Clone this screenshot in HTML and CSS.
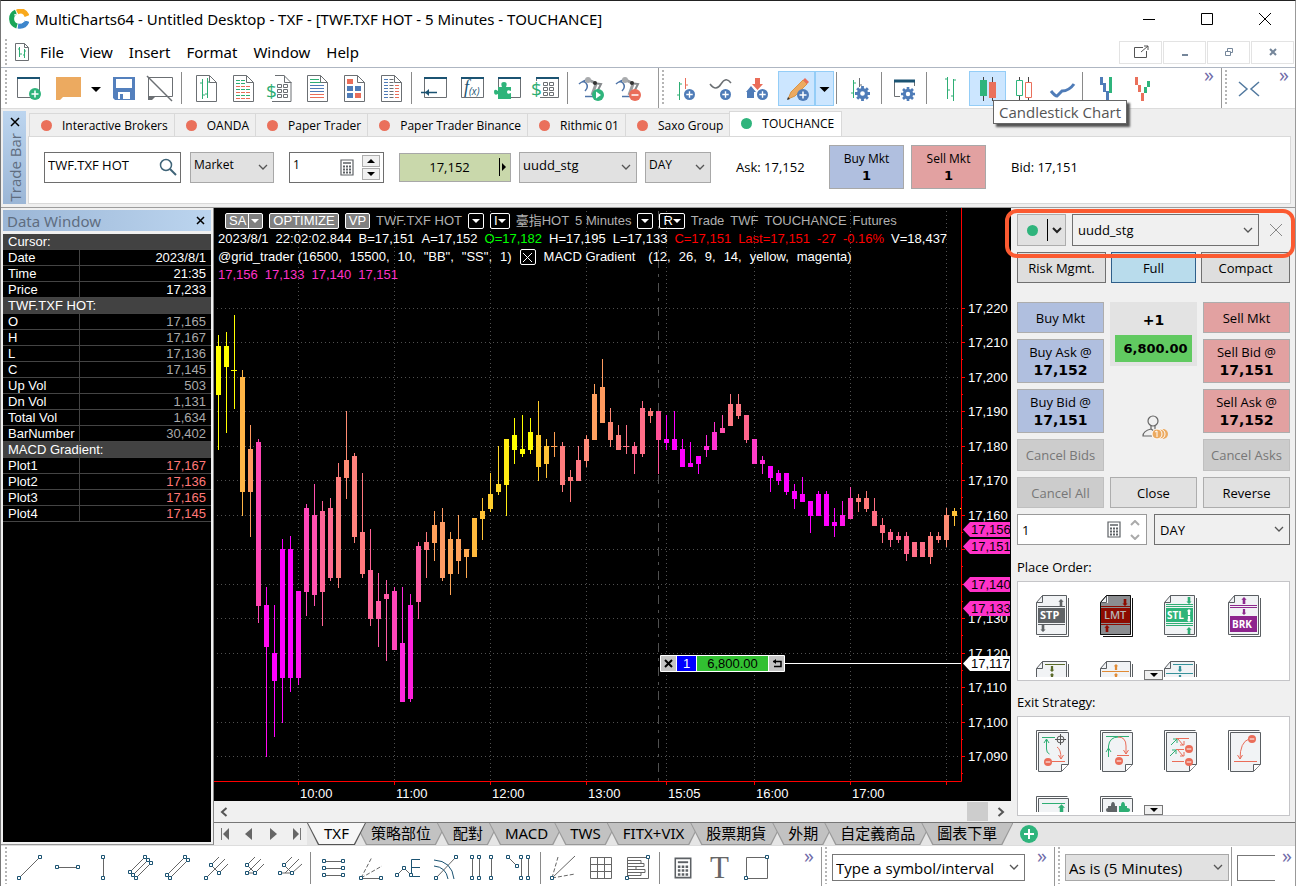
FILE: index.html
```
<!DOCTYPE html>
<html lang="en">
<head>
    <meta charset="UTF-8">
    <meta name="viewport" content="width=device-width, initial-scale=1.0">
    <title>MultiCharts64 - Untitled Desktop</title>
    <link rel="stylesheet" href="styles.css">
</head>
<body>
    <!-- shared icon parts -->
    <svg class="defs" width="0" height="0">
        <symbol id="page" viewBox="0 0 37 35"><path d="M9.500 4.500h13l7 7v19h-20zM22.500 4.500v7h7" fill="#fff" stroke="#6b6f73"/></symbol>
        <symbol id="win" viewBox="0 0 37 35"><path d="M7.500 7v19.500h22V7" fill="#fff" stroke="#6b6f73"/><path d="M7 7h23" stroke="#1b5372" stroke-width="2"/></symbol>
        <symbol id="plus" viewBox="0 0 12 12"><circle cx="6" cy="6" r="6"/><path d="M6 2.500v7M2.500 6h7" stroke="#fff" stroke-width="1.500"/></symbol>
        <symbol id="minus" viewBox="0 0 12 12"><circle cx="6" cy="6" r="6" fill="#ea6d59"/><path d="M2.500 6h7" stroke="#fff" stroke-width="1.500"/></symbol>
        <symbol id="gear" viewBox="0 0 16 16"><path d="M8 0v16M0 8h16M2.300 2.300l11.400 11.400M13.700 2.300L2.300 13.700" stroke="#4f7cb8" stroke-width="3"/><circle cx="8" cy="8" r="4.200" fill="#fff" stroke="#4f7cb8" stroke-width="3.400"/></symbol>
        <symbol id="calc" viewBox="0 0 14 17"><path d="M1 1h12v15H1z" fill="#fff" stroke="#5d6165" stroke-width="1.200"/><path d="M3 4h8" stroke="#5d6165" stroke-width="1.500"/><path d="M3 7.500h8M3 10.500h8M3 13.500h8" stroke="#5d6165" stroke-width="2" stroke-dasharray="2 1"/></symbol>
        <symbol id="arm" viewBox="0 0 37 35"><path d="M6 13q4-4 7-1 3 4-1 8M9 11l6-3" fill="none" stroke="#4f74a8" stroke-width="1.500"/><path d="M14 8l8 4M23 13l-4 11" stroke="#9b9da0" stroke-width="3"/><path d="M20 12l8 1-6 12" fill="none" stroke="#85888b" stroke-width="2"/><circle cx="15" cy="9" r="3" fill="#a9abad"/><circle cx="22" cy="12" r="2" fill="#333"/><path d="M12 25.500h8" stroke="#4f74a8" stroke-width="1.500"/></symbol>
        <symbol id="sheet" viewBox="0 0 34 42"><path d="M6.500.5h24v39H.5v-32zM6.500.5v7h-6" fill="#f1f3f5" stroke="#5a5e62"/><path d="M32.500 3v38.500H3" fill="none" stroke="#5a5e62"/></symbol>
        <symbol id="plan" viewBox="0 0 34 42"><path d="M.5 40V.5h31" fill="none" stroke="#5a5e62"/><path d="M2.500 2.500h30v32l-7 7h-23z" fill="#f1f3f5" stroke="#5a5e62"/><path d="M25.500 41v-6.500h7" fill="#fff" stroke="#5a5e62"/></symbol>
        <symbol id="up" viewBox="0 0 6 8"><path d="M3 0l3 3H4.500v5h-3V3H0z"/></symbol>
        <symbol id="down" viewBox="0 0 6 8"><path d="M3 8L0 5h1.500V0h3v5H6z"/></symbol>
        <symbol id="node" viewBox="0 0 4 4"><path d="M.5.5h3v3h-3z" fill="#fff" stroke="#1b5372"/></symbol>
    </svg>

    <header class="title-bar">
        <svg class="logo" width="20" height="20" viewBox="0 0 20 20" fill="none" stroke-width="5"><path d="M7 3a7.500 7.500 0 0 0 1 14" stroke="#19a558"/><path d="M8 3q7-3 10 4" stroke="#f9a91d"/><path d="M9 17q7 1 9-5" stroke="#3d86cc"/><path d="M12 14q3-2 8-4M5 6q2 0 4-2" stroke="#fff" stroke-width="1"/></svg>
        <h1>MultiCharts64 - Untitled Desktop - TXF - [TWF.TXF HOT - 5 Minutes - TOUCHANCE]</h1>
        <div class="window-controls">
            <button aria-label="Minimize"><svg width="14" height="14"><path d="M1 7.500h12" stroke="#000"/></svg></button>
            <button aria-label="Maximize"><svg width="14" height="14"><path d="M1.500 1.500h11v11h-11z" fill="none" stroke="#000"/></svg></button>
            <button aria-label="Close"><svg width="14" height="14"><path d="M1 1l12 12M13 1L1 13" stroke="#000"/></svg></button>
        </div>
    </header>

    <nav class="menu-bar">
        <span class="grip"></span>
        <svg class="menu-icon" width="16" height="19"><path d="M1.500.5h9l4 4v13h-13zM10.500.5v4h4" fill="#fff" stroke="#6b6f73"/><path d="M5.500 4v10M4 6h1M6 11h2M10.500 6v9M9 12h1M11 8h1" stroke="#2eae74"/></svg>
        <a href="#">File</a>
        <a href="#">View</a>
        <a href="#">Insert</a>
        <a href="#">Format</a>
        <a href="#">Window</a>
        <a href="#">Help</a>
        <div class="mdi-controls">
            <button aria-label="Detach"><svg width="16" height="14"><path d="M10 2.500H1.500v10h12V6M8 7l7-6M11 1h4v4" fill="none" stroke="#555"/></svg></button>
            <button aria-label="Minimize chart"><svg width="10" height="10"><path d="M2 8h6" stroke="#75869a" stroke-width="2"/></svg></button>
            <button aria-label="Restore chart"><svg width="10" height="10"><path d="M1.500 4.500h5v4h-5zM3.500 4V1.500h5v4H7" fill="none" stroke="#75869a"/></svg></button>
            <button aria-label="Close chart"><svg width="10" height="10"><path d="M2 2l6 6M8 2L2 8" stroke="#75869a" stroke-width="2"/></svg></button>
        </div>
    </nav>

    <div class="toolbar">
        <span class="grip"></span>
        <button class="tool" aria-label="New"><svg viewBox="0 0 37 35"><use href="#win"/><use href="#plus" x="19" y="17" width="12" height="12" fill="#2fb47c"/></svg></button>
        <button class="tool gap-left" aria-label="Open"><svg viewBox="0 0 37 35"><path d="M6 6h25v20H13l-3 3H6z" fill="#ecaa60"/></svg></button>
        <button class="tool drop" aria-label="Open menu"><svg viewBox="0 0 18 35"><path d="M4 16h10l-5 5z" fill="#000"/></svg></button>
        <button class="tool" aria-label="Save"><svg viewBox="0 0 37 35"><path d="M8 6h22v23H10l-2-2z" fill="#5480bd"/><path d="M11 8h16v9H11z" fill="#fff"/><path d="M13 21h12v7H13z" fill="#fff"/><path d="M15 23h3v5h-3z" fill="#5480bd"/></svg></button>
        <button class="tool" aria-label="Close workspace"><svg viewBox="0 0 37 35"><path d="M6.500 6.500h24v19h-19l-5 3z" fill="none" stroke="#6b6f73"/><path d="M6 25h8l-4 4H6z" fill="#6b6f73"/><path d="M5 5l25 25" stroke="#6b6f73" stroke-width="1.500"/></svg></button>
        <span class="sep"></span>
        <button class="tool" aria-label="Chart window"><svg viewBox="0 0 37 35"><use href="#page"/><path d="M15.500 8v20M13 12h2M16 24h2M20.500 7v20M18 23h2M21 11h2" stroke="#2eae74"/></svg></button>
        <button class="tool" aria-label="Scanner"><svg viewBox="0 0 37 35"><use href="#page"/><g stroke-dasharray="4 1"><path d="M12 9.500h9M12 12.500h9M12 18.500h14M12 24.500h14" stroke="#2eae74"/><path d="M12 15.500h14M12 21.500h14M12 27.500h14" stroke="#ea6d59"/></g></svg></button>
        <button class="tool" aria-label="Portfolio"><svg viewBox="0 0 37 35"><path d="M14 4.500h9l7 7v19H11M23.500 4.500v7h7" fill="none" stroke="#6b6f73"/><path d="M16.500 13.500h4v3h-4zM22.500 13.500h4v3h-4zM16.500 18.500h4v3h-4zM22.500 18.500h4v3h-4zM16.500 23.500h4v3h-4zM22.500 23.500h4v3h-4z" fill="none" stroke="#6b6f73"/><text x="5" y="27" font-size="19" fill="#2eae74">$</text></svg></button>
        <button class="tool" aria-label="Order tracker"><svg viewBox="0 0 37 35"><use href="#page"/><path d="M12 8.500h9M12 11.500h11" stroke="#2eae74"/><path d="M12 14.500h14M12 17.500h14M12 20.500h14" stroke="#4f7cb8"/><path d="M12 23.500h14M12 26.500h14" stroke="#ea6d59"/></svg></button>
        <button class="tool" aria-label="DOM"><svg viewBox="0 0 37 35"><use href="#page"/><path d="M12 8h6v5h-6zM20 22h6v5h-6z" fill="#ea6d59"/><path d="M12 15h6v5h-6zM20 15h6v5h-6zM12 22h6v5h-6z" fill="#4f7cb8"/></svg></button>
        <button class="tool" aria-label="Time and sales"><svg viewBox="0 0 37 35"><use href="#page"/><g stroke-width="4" stroke-dasharray="1 2"><path d="M14 8v21" stroke="#4f7cb8"/><path d="M19.500 8v21" stroke="#6b6f73"/><path d="M25 14v15" stroke="#ea6d59"/></g></svg></button>
        <span class="sep"></span>
        <button class="tool" aria-label="Insert symbol"><svg viewBox="0 0 37 35"><use href="#win"/><path d="M4 21.500h16" stroke="#1b5372" stroke-width="1.500"/><path d="M12 18l-4 3.500 4 3.500z" fill="#1b5372"/></svg></button>
        <button class="tool" aria-label="Insert study"><svg viewBox="0 0 37 35"><use href="#win"/><text x="10" y="22" font-size="18" font-style="italic" font-family="Liberation Serif, serif" fill="#1b5372">f</text><text x="15" y="24" font-size="10" fill="#1b5372" font-style="italic">(x)</text></svg></button>
        <button class="tool" aria-label="Add-ons"><svg viewBox="0 0 37 35"><use href="#win"/><path d="M7 16h4q-2-5 2-5t2 5h5v4q-4-2-4 1t4 1v6H7v-5q-4 2-4-2t4-1z" fill="#2eb47a"/></svg></button>
        <button class="tool" aria-label="Quotes"><svg viewBox="0 0 37 35"><path d="M8.500 10V7h22v19.500H12" fill="none" stroke="#6b6f73"/><path d="M8 7h23" stroke="#1b5372" stroke-width="2"/><path d="M15.500 11.500h4v3h-4zM21.500 11.500h4v3h-4zM15.500 16.500h4v3h-4zM21.500 16.500h4v3h-4zM15.500 21.500h4v3h-4zM21.500 21.500h4v3h-4z" fill="none" stroke="#6b6f73"/><text x="3" y="25" font-size="19" fill="#2eae74">$</text></svg></button>
        <span class="sep"></span>
        <button class="tool" aria-label="Start auto trading"><svg viewBox="0 0 37 35"><use href="#arm"/><circle cx="25" cy="24" r="6" fill="#2fb47c"/><path d="M23 20.500l5 3.500-5 3.500z" fill="#fff"/></svg></button>
        <button class="tool" aria-label="Stop auto trading"><svg viewBox="0 0 37 35"><use href="#arm"/><use href="#minus" x="19" y="18" width="12" height="12"/></svg></button>
        <span class="band-end wide"></span>
        <span class="grip"></span>
        <button class="tool" aria-label="Add instrument"><svg viewBox="0 0 37 35"><path d="M12.500 11v18M10 24h2M13 13h2" stroke="#2eae74"/><path d="M18.500 7v11M19 14h2" stroke="#ea6d59"/><use href="#plus" x="17" y="18" width="11" height="11" fill="#4f7cb8"/></svg></button>
        <button class="tool" aria-label="Add indicator"><svg viewBox="0 0 37 35"><path d="M6 13q6 8 11 0t10-1" fill="none" stroke="#6b6f73" stroke-width="1.500"/><use href="#plus" x="16" y="18" width="11" height="11" fill="#4f7cb8"/></svg></button>
        <button class="tool" aria-label="Add signal"><svg viewBox="0 0 37 35"><path d="M10 15l5 6h-2v6H6v-6H5z" fill="#4f7cb8"/><path d="M14 7h5v6h3l-5.500 6L11 13h3z" fill="#ea6d59"/><use href="#plus" x="16" y="18" width="11" height="11" fill="#4f7cb8"/></svg></button>
        <button class="tool on" aria-label="Drawing"><svg viewBox="0 0 37 35"><path d="M10 28l3-7 12-12 4 4-12 12z" fill="#ecaa60" stroke="#d99445"/><path d="M25 9l2-2 4 4-2 2z" fill="#ea6d59"/><path d="M9 29l1-3 2 2z" fill="#333"/><use href="#plus" x="19" y="18" width="12" height="12" fill="#4f7cb8"/></svg></button>
        <button class="tool drop on" aria-label="Drawing menu"><svg viewBox="0 0 18 35"><path d="M4 16h10l-5 5z" fill="#000"/></svg></button>
        <span class="sep"></span>
        <button class="tool" aria-label="Format instrument"><svg viewBox="0 0 37 35"><path d="M11.500 9v18M9 22h2M12 12h2" stroke="#2eae74"/><path d="M17.500 7v9M18 14h2" stroke="#6b6f73"/><use href="#gear" x="13" y="15" width="15" height="15"/></svg></button>
        <span class="sep"></span>
        <button class="tool" aria-label="Format window"><svg viewBox="0 0 37 35"><path d="M7.500 9v16.500H13M27.500 9v6" fill="none" stroke="#6b6f73"/><path d="M7 10h21" stroke="#1b5372" stroke-width="3"/><use href="#gear" x="14" y="16" width="14" height="14"/></svg></button>
        <span class="sep"></span>
        <button class="tool" aria-label="Bar chart"><svg viewBox="0 0 37 35"><path d="M15.500 6v22M13 8h2M16 19h2M21.500 8v22M19 25h2M22 9h2" stroke="#2eae74"/></svg></button>
        <div class="tip-holder">
            <button class="tool on" aria-label="Candlestick Chart"><svg viewBox="0 0 37 35"><path d="M14.500 6v24M23.500 6v24" stroke="#444"/><path d="M11 9h7v16h-7z" fill="#2fb47c"/><path d="M20 11h7v16h-7z" fill="#ea705b"/></svg></button>
            <div class="tooltip" role="tooltip">Candlestick Chart</div>
        </div>
        <button class="tool" aria-label="Hollow candlestick"><svg viewBox="0 0 37 35"><path d="M13.500 6v24M22.500 6v24" stroke="#444"/><path d="M10.500 9.500h6v15h-6z" fill="#fff" stroke="#2fb47c"/><path d="M19.500 11.500h6v15h-6z" fill="#fff" stroke="#ea705b"/></svg></button>
        <button class="tool" aria-label="Line chart"><svg viewBox="0 0 37 35"><path d="M8 20q4 5 6 5l5-5q7 0 12-7" fill="none" stroke="#4f7cb8" stroke-width="3"/></svg></button>
        <span class="sep"></span>
        <button class="tool" aria-label="Kagi"><svg viewBox="0 0 37 35"><path d="M12 6h3v8h-3zM15 12h3v9h-3zM18 20h3v10h-3z" fill="#4f7cb8"/><path d="M21 6h3v16h-3z" fill="#2fb47c"/></svg></button>
        <button class="tool" aria-label="Renko"><svg viewBox="0 0 37 35"><path d="M10 6h3v8h-3zM13 14h3v7h-3zM16 22h3v8h-3z" fill="#ea705b"/><path d="M19 16h3v6h-3zM22 10h3v6h-3z" fill="#2fb47c"/></svg></button>
        <span class="fill"></span>
        <button class="more" aria-label="More tools">»</button>
        <span class="band-end"></span>
        <span class="grip"></span>
        <button class="tool" aria-label="Squeeze bars"><svg viewBox="0 0 37 35"><path d="M9 11l8 7-8 7M29 11l-8 7 8 7" fill="none" stroke="#52799f" stroke-width="1.500"/></svg></button>
        <span class="space"></span>
        <button class="more" aria-label="More tools">»</button>
    </div>

    <section class="trade-bar">
        <div class="trade-handle">
            <button aria-label="Close trade bar"><svg width="10" height="10"><path d="M1 1l8 8M9 1L1 9" stroke="#000" stroke-width="1.500"/></svg></button>
            <span>Trade Bar</span>
        </div>
        <div class="trade-body">
            <div class="broker-tabs">
                <button><i class="dot"></i>Interactive Brokers</button>
                <button><i class="dot"></i>OANDA</button>
                <button><i class="dot"></i>Paper Trader</button>
                <button><i class="dot"></i>Paper Trader Binance</button>
                <button><i class="dot"></i>Rithmic 01</button>
                <button><i class="dot"></i>Saxo Group</button>
                <button class="active"><i class="dot live"></i>TOUCHANCE</button>
            </div>
            <form class="trade-form">
                <div class="field symbol-field">
                    <input type="text" value="TWF.TXF HOT" aria-label="Symbol">
                    <svg width="18" height="18"><circle cx="7" cy="7" r="5.500" fill="none" stroke="#3f6478" stroke-width="1.500"/><path d="M11 11l6 6" stroke="#3f6478" stroke-width="2"/></svg>
                </div>
                <select class="order-type" aria-label="Order type"><option>Market</option></select>
                <div class="field qty-field">
                    <input type="text" value="1" aria-label="Quantity">
                    <svg width="14" height="17"><use href="#calc"/></svg>
                    <span class="spin"><button type="button" aria-label="Up"><svg width="8" height="4"><path d="M4 0l4 4H0z"/></svg></button><button type="button" aria-label="Down"><svg width="8" height="4"><path d="M4 4l4-4H0z"/></svg></button></span>
                </div>
                <button type="button" class="price"><span>17,152</span><svg width="8" height="18"><path d="M.5 0v18" stroke="#000"/><path d="M3 5l4 4-4 4z"/></svg></button>
                <select class="account" aria-label="Account"><option>uudd_stg</option></select>
                <select class="tif" aria-label="Time in force"><option>DAY</option></select>
                <span class="quote">Ask: 17,152</span>
                <button type="button" class="big buy">Buy Mkt<b>1</b></button>
                <button type="button" class="big sell">Sell Mkt<b>1</b></button>
                <span class="quote">Bid: 17,151</span>
            </form>
        </div>
    </section>

    <main class="workspace">
        <aside class="data-window">
            <div class="data-title">
                <h2>Data Window</h2>
                <button aria-label="Close data window"><svg width="9" height="9"><path d="M1 1l7 7M8 1L1 8" stroke="#000" stroke-width="1.500"/></svg></button>
            </div>
            <table>
                <tr><th colspan="2">Cursor:</th></tr>
                <tr><td>Date</td><td>2023/8/1</td></tr>
                <tr><td>Time</td><td>21:35</td></tr>
                <tr><td>Price</td><td>17,233</td></tr>
                <tr><th colspan="2">TWF.TXF HOT:</th></tr>
                <tr class="dim"><td>O</td><td>17,165</td></tr>
                <tr class="dim"><td>H</td><td>17,167</td></tr>
                <tr class="dim"><td>L</td><td>17,136</td></tr>
                <tr class="dim"><td>C</td><td>17,145</td></tr>
                <tr class="dim"><td>Up Vol</td><td>503</td></tr>
                <tr class="dim"><td>Dn Vol</td><td>1,131</td></tr>
                <tr class="dim"><td>Total Vol</td><td>1,634</td></tr>
                <tr class="dim"><td>BarNumber</td><td>30,402</td></tr>
                <tr><th colspan="2">MACD Gradient:</th></tr>
                <tr class="plot"><td>Plot1</td><td>17,167</td></tr>
                <tr class="plot"><td>Plot2</td><td>17,136</td></tr>
                <tr class="plot"><td>Plot3</td><td>17,165</td></tr>
                <tr class="plot"><td>Plot4</td><td>17,145</td></tr>
            </table>
        </aside>

        <div class="desk">
            <div class="desk-top">
                <section class="chart-pane">
                    <div class="chart" id="chart">
                        <div class="chart-status">
                            <div class="line tags">
                                <button class="tag">SA<i class="split"></i><i class="tri"></i></button>
                                <button class="tag">OPTIMIZE</button>
                                <button class="tag">VP</button>
                                <span>TWF.TXF HOT</span>
                                <button class="box" aria-label="Symbol menu"><i class="tri"></i></button>
                                <button class="box">I<i class="tri"></i></button>
                                <span>臺指HOT</span>
                                <span>5 Minutes</span>
                                <button class="box" aria-label="Interval menu"><i class="tri"></i></button>
                                <button class="box">R<i class="tri"></i></button>
                                <span>Trade</span>
                                <span>TWF</span>
                                <span>TOUCHANCE</span>
                                <span>Futures</span>
                            </div>
                            <div class="line">
                                <span>2023/8/1</span>
                                <span>22:02:02.844</span>
                                <span>B=17,151</span>
                                <span>A=17,152</span>
                                <span class="green">O=17,182</span>
                                <span>H=17,195</span>
                                <span>L=17,133</span>
                                <span class="red">C=17,151</span>
                                <span class="red">Last=17,151</span>
                                <span class="red">-27</span>
                                <span class="red">-0.16%</span>
                                <span>V=18,437</span>
                            </div>
                            <div class="line args">
                                <span>@grid_trader (16500,</span>
                                <span>15500,</span>
                                <span>10,</span>
                                <span>"BB",</span>
                                <span>"SS",</span>
                                <span>1)</span>
                                <button class="box cross" aria-label="Strategy off"><svg width="9" height="9"><path d="M0 0l9 9M9 0L0 9" stroke="#fff"/></svg></button>
                                <span>MACD Gradient</span>
                                <span class="params">(12,</span>
                                <span>26,</span>
                                <span>9,</span>
                                <span>14,</span>
                                <span>yellow,</span>
                                <span>magenta)</span>
                            </div>
                            <div class="line pink">
                                <span>17,156</span>
                                <span>17,133</span>
                                <span>17,140</span>
                                <span>17,151</span>
                            </div>
                        </div>
                        <div class="position">
                            <button aria-label="Close position"><svg width="9" height="9"><path d="M1 1l7 7M8 1L1 8" stroke="#000" stroke-width="2"/></svg></button>
                            <span class="size">1</span>
                            <span class="profit">6,800.00</span>
                            <button aria-label="Reverse position"><svg width="10" height="9"><path d="M1 2.500h8v5H2" fill="none" stroke="#000" stroke-width="1.500"/><path d="M4 0v5L1 2.500z"/></svg></button>
                        </div>
                    </div>
                    <div class="scroll">
                        <button aria-label="Scroll left"><svg width="8" height="10"><path d="M6.500 1L2 5l4.500 4" fill="none" stroke="#555" stroke-width="2"/></svg></button>
                        <span class="thumb"></span>
                        <button aria-label="Scroll right"><svg width="8" height="10"><path d="M1.500 1L6 5 1.500 9" fill="none" stroke="#555" stroke-width="2"/></svg></button>
                    </div>
                </section>

                <aside class="order-panel">
                    <div class="ring"></div>
                    <div class="account-row">
                        <button class="status" aria-label="Connection"><i class="dot live"></i><svg width="18" height="22"><path d="M1.500 0v22" stroke="#000"/><path d="M7 9l4 4 4-4" fill="none" stroke="#222" stroke-width="2"/></svg></button>
                        <select aria-label="Account"><option>uudd_stg</option></select>
                        <button class="close" aria-label="Close panel"><svg width="14" height="14"><path d="M1 1l12 12M13 1L1 13" stroke="#888"/></svg></button>
                    </div>
                    <div class="mode-row">
                        <button>Risk Mgmt.</button>
                        <button class="active">Full</button>
                        <button>Compact</button>
                    </div>
                    <div class="order-grid">
                        <div class="column">
                            <button class="buy">Buy Mkt</button>
                            <button class="buy two">Buy Ask @<b>17,152</b></button>
                            <button class="buy two">Buy Bid @<b>17,151</b></button>
                            <button class="cancel" disabled>Cancel Bids</button>
                            <button disabled>Cancel All</button>
                        </div>
                        <div class="column middle">
                            <div class="pnl"><b>+1</b><strong>6,800.00</strong></div>
                            <svg width="28" height="26"><circle cx="13" cy="6" r="5" fill="none" stroke="#666" stroke-width="1.200"/><path d="M11 11v3q-8 2-8 7h9M15 11v3l5 3M11 14l3 2 2-2" fill="none" stroke="#666" stroke-width="1.200"/><circle cx="23" cy="19" r="5" fill="#ecaa60"/><circle cx="20" cy="19" r="5" fill="#ecaa60" stroke="#fff"/><circle cx="17" cy="19" r="5" fill="#ecaa60" stroke="#fff"/><path d="M15 17l2-1v6" fill="none" stroke="#fff"/></svg>
                            <button>Close</button>
                        </div>
                        <div class="column">
                            <button class="sell">Sell Mkt</button>
                            <button class="sell two">Sell Bid @<b>17,151</b></button>
                            <button class="sell two">Sell Ask @<b>17,152</b></button>
                            <button class="cancel" disabled>Cancel Asks</button>
                            <button>Reverse</button>
                        </div>
                    </div>
                    <div class="size-row">
                        <div class="field">
                            <input type="text" value="1" aria-label="Order quantity">
                            <svg width="14" height="17"><use href="#calc"/></svg>
                            <svg width="10" height="20" fill="none" stroke="#aaa" stroke-width="2"><path d="M1 5l4-4 4 4M1 15l4 4 4-4"/></svg>
                        </div>
                        <select aria-label="Order duration"><option>DAY</option></select>
                    </div>
                    <h3>Place Order:</h3>
                    <div class="palette">
                        <div class="palette-items">
                            <button aria-label="Stop"><svg width="34" height="42"><use href="#sheet"/><path d="M2 11.500h27M2 29.500h27" stroke="#5a5e62"/><path d="M2 13h27v15H2z" fill="#5f6366"/><use href="#up" x="22" y="4" width="6" height="7" fill="#5f6366"/><use href="#down" x="4" y="30" width="6" height="7" fill="#5f6366"/><text x="4" y="24">STP</text></svg></button>
                            <button aria-label="Limit"><svg width="34" height="42"><use href="#sheet"/><path d="M1 8h7V1h22v38H1z" fill="#8b8d90"/><path d="M1 11.500h29M1 29.500h29" stroke="#8d0b00"/><path d="M1 13h29v15H1z" fill="#8d0b00"/><path d="M6.500.5h24v39H.5v-32zM32.500 3v38.500H3" fill="none" stroke="#111"/><use href="#down" x="22" y="4" width="6" height="7" fill="#8d0b00"/><use href="#up" x="4" y="30" width="6" height="7" fill="#8d0b00"/><text x="4" y="24" class="muted">LMT</text></svg></button>
                            <button aria-label="Stop limit"><svg width="34" height="42"><use href="#sheet"/><path d="M2 9.500h27M2 11.500h27M2 28.500h27M2 30.500h27" stroke="#2eae74"/><path d="M2 13h27v14H2z" fill="#2eb47a"/><use href="#down" x="22" y="2" width="6" height="7" fill="#2eae74"/><use href="#up" x="22" y="32" width="6" height="7" fill="#2eae74"/><use href="#up" x="22" y="14" width="6" height="6" fill="#fff"/><use href="#down" x="22" y="21" width="6" height="6" fill="#fff"/><text x="3" y="24" class="small">STL</text></svg></button>
                            <button aria-label="Breakout"><svg width="34" height="42"><use href="#sheet"/><path d="M2 10.500h27M2 12.500h27" stroke="#8d2a8d"/><path d="M2 21h27v16H2z" fill="#8d248d"/><use href="#up" x="13" y="2" width="6" height="7" fill="#8d2a8d"/><use href="#down" x="13" y="14" width="6" height="6" fill="#8d2a8d"/><text x="4" y="33" class="small">BRK</text></svg></button>
                            <button aria-label="Market if touched"><svg width="34" height="42"><use href="#sheet"/><path d="M9 3.500h20" stroke="#5b6b2a"/><use href="#down" x="13" y="5" width="6" height="6" fill="#5b6b2a"/><use href="#up" x="13" y="12" width="6" height="6" fill="#5b6b2a"/></svg></button>
                            <button aria-label="Limit on break"><svg width="34" height="42"><use href="#sheet"/><path d="M2 10.500h27" stroke="#e08a34"/><use href="#up" x="13" y="3" width="6" height="6" fill="#e08a34"/><use href="#up" x="13" y="12" width="6" height="6" fill="#e08a34"/></svg></button>
                            <button aria-label="Trailing"><svg width="34" height="42"><use href="#sheet"/><path d="M9 3.500h20M2 12.500h27" stroke="#35919a"/><use href="#down" x="13" y="5" width="6" height="6" fill="#35919a"/><use href="#down" x="13" y="14" width="6" height="6" fill="#35919a"/></svg></button>
                        </div>
                        <button class="expand" aria-label="More orders"><i class="tri dark"></i></button>
                    </div>
                    <h3>Exit Strategy:</h3>
                    <div class="palette">
                        <div class="palette-items">
                            <button aria-label="Stop and target"><svg width="34" height="42" fill="none"><use href="#plan"/><path d="M6 7.500h13M10.500 9v10q0 4 3 5M8 13l2.500-4 2.500 4" stroke="#2eae74"/><circle cx="24.500" cy="9.500" r="3.500" stroke="#555"/><path d="M24.500 4v11M19 9.500h11" stroke="#555"/><path d="M21 17q4 2 4 12M22.500 25l2.500 4 2.500-4M16 31.500h13" stroke="#ea6d59"/><use href="#minus" x="8" y="28" width="8" height="8"/></svg></button>
                            <button aria-label="Trailing stop"><svg width="34" height="42" fill="none"><use href="#plan"/><path d="M6 6.500h23M8.500 27V16q1-9 10-9M6 22l2.500-4 2.500 4" stroke="#2eae74"/><path d="M18 7q8 0 8 9v8M23.500 20l2.500 4 2.500-4M17 25.500h12" stroke="#ea6d59"/><use href="#minus" x="15" y="27" width="8" height="8"/></svg></button>
                            <button aria-label="Multi level"><svg width="34" height="42" fill="none"><use href="#plan"/><path d="M7 15l6-6M9 9h4v4M6 26l6-6M8 20h4v4" stroke="#2eae74"/><path d="M12 8.500h13M14 9l5 6M20 11v4h-4M12 19.500h8M14 20l5 6M20 22v4h-4M8 31.500h12" stroke="#ea6d59"/><use href="#minus" x="21" y="15" width="8" height="8"/><use href="#minus" x="21" y="28" width="8" height="8"/></svg></button>
                            <button aria-label="Breakeven"><svg width="34" height="42" fill="none"><use href="#plan"/><path d="M21 9q-9 3-9 20M9.500 25l2.500 4 2.500-4M6 31.500h23" stroke="#ea6d59"/><use href="#minus" x="20" y="5" width="8" height="8"/></svg></button>
                            <button aria-label="Profit target"><svg width="34" height="42" fill="none"><use href="#plan"/><path d="M6 7.500h23" stroke="#2eae74"/><use href="#up" x="22" y="8" width="7" height="10" fill="#2eae74"/></svg></button>
                            <button aria-label="Custom"><svg width="34" height="42" fill="none"><use href="#plan"/><path d="M8 10h3q0-4 2-4t2 4h2v8H8v-2q-2 0-2-2t2-2z" fill="#5f6366"/><path d="M19 10h2q0-4 2-4t2 4h2v2q3 0 3 2t-3 2v2h-8z" fill="#2eae74"/></svg></button>
                        </div>
                        <button class="expand" aria-label="More strategies"><i class="tri dark"></i></button>
                    </div>
                </aside>
            </div>

            <div class="sheet-tabs">
                <div class="sheet-nav">
                    <button aria-label="First"><svg width="10" height="12"><path d="M1.500 0v12" stroke="#777"/><path d="M9 0v12L3 6z" fill="#666"/></svg></button>
                    <button aria-label="Previous"><svg width="10" height="12"><path d="M8 0v12L1 6z" fill="#666"/></svg></button>
                    <button aria-label="Next"><svg width="10" height="12"><path d="M2 0v12l7-6z" fill="#666"/></svg></button>
                    <button aria-label="Last"><svg width="10" height="12"><path d="M8.500 0v12" stroke="#777"/><path d="M1 0v12l6-6z" fill="#666"/></svg></button>
                </div>
                <button class="sheet active"><span>TXF</span></button>
                <button class="sheet"><span>策略部位</span></button>
                <button class="sheet"><span>配對</span></button>
                <button class="sheet"><span>MACD</span></button>
                <button class="sheet"><span>TWS</span></button>
                <button class="sheet"><span>FITX+VIX</span></button>
                <button class="sheet"><span>股票期貨</span></button>
                <button class="sheet"><span>外期</span></button>
                <button class="sheet"><span>自定義商品</span></button>
                <button class="sheet"><span>圖表下單</span></button>
                <button class="add-sheet" aria-label="Add workspace"><svg width="18" height="18"><circle cx="9" cy="9" r="9" fill="#2fb47c"/><path d="M9 4v10M4 9h10" stroke="#fff" stroke-width="2"/></svg></button>
            </div>
        </div>
    </main>

    <footer class="toolbar draw-bar">
        <span class="grip"></span>
        <button class="tool" aria-label="Trend line"><svg viewBox="0 0 37 35"><path d="M7 28L28 7"/><use href="#node" x="5" y="26" width="4" height="4"/><use href="#node" x="26" y="5" width="4" height="4"/></svg></button>
        <button class="tool" aria-label="Horizontal line"><svg viewBox="0 0 37 35"><path d="M8 17.500h21"/><use href="#node" x="6" y="15" width="4" height="4"/><use href="#node" x="27" y="15" width="4" height="4"/></svg></button>
        <button class="tool" aria-label="Vertical line"><svg viewBox="0 0 37 35"><path d="M17.500 7v21"/><use href="#node" x="15" y="5" width="4" height="4"/><use href="#node" x="15" y="26" width="4" height="4"/></svg></button>
        <button class="tool" aria-label="Equidistant channel"><svg viewBox="0 0 37 35"><path d="M7 22L22 7M10 25l15-15M13 28l15-15"/><use href="#node" x="5" y="20" width="4" height="4"/><use href="#node" x="8" y="23" width="4" height="4"/><use href="#node" x="11" y="26" width="4" height="4"/><use href="#node" x="20" y="5" width="4" height="4"/><use href="#node" x="23" y="8" width="4" height="4"/><use href="#node" x="26" y="11" width="4" height="4"/></svg></button>
        <button class="tool" aria-label="Parallel lines"><svg viewBox="0 0 37 35"><path d="M7 25L25 7M10 28l18-18"/><use href="#node" x="5" y="23" width="4" height="4"/><use href="#node" x="8" y="26" width="4" height="4"/><use href="#node" x="23" y="5" width="4" height="4"/><use href="#node" x="26" y="8" width="4" height="4"/></svg></button>
        <button class="tool" aria-label="Pitchfork"><svg viewBox="0 0 37 35"><path d="M9 28L28 9M14 15l8-8M22 23l9-9M14 15l8 8"/><use href="#node" x="7" y="26" width="4" height="4"/><use href="#node" x="12" y="13" width="4" height="4"/><use href="#node" x="20" y="21" width="4" height="4"/></svg></button>
        <button class="tool" aria-label="Schiff pitchfork"><svg viewBox="0 0 37 35"><path d="M13 23L27 9M13 15l8-8M21 23l9-9M13 15l8 8h-8"/><use href="#node" x="11" y="21" width="4" height="4"/><use href="#node" x="11" y="13" width="4" height="4"/><use href="#node" x="19" y="21" width="4" height="4"/></svg></button>
        <button class="tool" aria-label="Modified pitchfork"><svg viewBox="0 0 37 35"><path d="M14 23L28 9M13 15l8-8M21 23l10-9M13 15l8 8H9"/><use href="#node" x="7" y="21" width="4" height="4"/><use href="#node" x="11" y="13" width="4" height="4"/><use href="#node" x="19" y="21" width="4" height="4"/></svg></button>
        <span class="sep"></span>
        <button class="tool" aria-label="Fibonacci retracement"><svg viewBox="0 0 37 35"><path d="M8 11.500h19M8 18.500h19M8 25.500h19"/><use href="#node" x="6" y="9" width="4" height="4"/><use href="#node" x="25" y="9" width="4" height="4"/><use href="#node" x="6" y="16" width="4" height="4"/><use href="#node" x="25" y="16" width="4" height="4"/><use href="#node" x="6" y="23" width="4" height="4"/><use href="#node" x="25" y="23" width="4" height="4"/></svg></button>
        <button class="tool" aria-label="Fibonacci fan"><svg viewBox="0 0 37 35"><path d="M8 28.500h20"/><path d="M8 28L19 7M8 28l21-12" stroke-dasharray="4 2"/><use href="#node" x="6" y="26" width="4" height="4"/><use href="#node" x="26" y="26" width="4" height="4"/></svg></button>
        <button class="tool" aria-label="Fibonacci extension"><svg viewBox="0 0 37 35"><path d="M7 25l7-7 7 7"/><path d="M30 9.500h-8.500v17H30M22 17.500h8" class="blue"/><use href="#node" x="5" y="23" width="4" height="4"/><use href="#node" x="12" y="16" width="4" height="4"/><use href="#node" x="19" y="23" width="4" height="4"/></svg></button>
        <button class="tool" aria-label="Fibonacci arcs"><svg viewBox="0 0 37 35"><path d="M9 28L29 7"/><path d="M7 10q18 1 20 19M7 16q12 1 14 13" class="blue"/><use href="#node" x="7" y="26" width="4" height="4"/><use href="#node" x="27" y="5" width="4" height="4"/></svg></button>
        <button class="tool" aria-label="Fibonacci time"><svg viewBox="0 0 37 35"><path d="M8.500 7v21M15.500 7v21M27.500 7v21"/><use href="#node" x="6" y="5" width="4" height="4"/><use href="#node" x="13" y="5" width="4" height="4"/><use href="#node" x="25" y="5" width="4" height="4"/><use href="#node" x="6" y="26" width="4" height="4"/><use href="#node" x="13" y="26" width="4" height="4"/><use href="#node" x="25" y="26" width="4" height="4"/></svg></button>
        <button class="tool" aria-label="Trend based time"><svg viewBox="0 0 37 35"><path d="M7 7l9 9M20.500 7v21M27.500 7v21"/><use href="#node" x="5" y="5" width="4" height="4"/><use href="#node" x="14" y="14" width="4" height="4"/><use href="#node" x="18" y="5" width="4" height="4"/><use href="#node" x="25" y="5" width="4" height="4"/><use href="#node" x="18" y="26" width="4" height="4"/><use href="#node" x="25" y="26" width="4" height="4"/></svg></button>
        <span class="sep"></span>
        <button class="tool" aria-label="Gann fan"><svg viewBox="0 0 37 35"><path d="M6 28L29 6"/><path d="M6 28l6-21M6 28l23-4" stroke-dasharray="4 2"/><use href="#node" x="4" y="26" width="4" height="4"/></svg></button>
        <button class="tool" aria-label="Gann grid"><svg viewBox="0 0 37 35"><path d="M7.500 7.500h21v21h-21zM14.500 7v21M21.500 7v21M7 14.500h21M7 21.500h21"/></svg></button>
        <button class="tool" aria-label="Volume profile"><svg viewBox="0 0 37 35"><path d="M7.500 7.500h21v21h-21zM8 10.500h13v3h3v3H16v3h9v3h-4v3H8M8 13.500h13M8 16.500h8M8 19.500h8M8 22.500h13"/><use href="#node" x="26" y="5" width="4" height="4"/><use href="#node" x="5" y="26" width="4" height="4"/></svg></button>
        <span class="sep"></span>
        <button class="tool" aria-label="Calculator"><svg viewBox="0 0 37 35"><use href="#calc" x="9" y="7" width="18" height="22"/></svg></button>
        <button class="tool" aria-label="Text"><svg viewBox="0 0 37 35"><text x="8" y="28" font-size="31" font-family="Liberation Serif, serif" fill="#666">T</text></svg></button>
        <button class="tool" aria-label="Rectangle"><svg viewBox="0 0 37 35"><path d="M7.500 7.500h21v21h-21z"/><use href="#node" x="26" y="5" width="4" height="4"/><use href="#node" x="5" y="26" width="4" height="4"/></svg></button>
        <span class="fill"></span>
        <button class="more" aria-label="More drawings">»</button>
        <span class="band-end"></span>
        <span class="grip"></span>
        <select class="symbol-pick" aria-label="Symbol or interval"><option>Type a symbol/interval</option></select>
        <span class="space"></span>
        <button class="more" aria-label="More symbols">»</button>
        <span class="band-end"></span>
        <span class="grip"></span>
        <select class="resolution" aria-label="Resolution"><option>As is (5 Minutes)</option></select>
        <span class="band-end"></span>
        <input class="tail" type="text" aria-label="Bars back">
        <button class="more" aria-label="More resolutions">»</button>
    </footer>

    <script src="chart.js"></script>
</body>
</html>
```
FILE: styles.css
```
* {
    box-sizing: border-box;
}
body {
    margin: 0;
    height: 100vh;
    display: flex;
    flex-direction: column;
    overflow: hidden;
    background-color: #fff;
    border-top: 1px solid #222;
    border-left: 1px solid #777;
    border-right: 1px solid #999;
    font-family: "Open Sans", "Noto Sans CJK TC", sans-serif;
    font-size: 13px;
    color: #000;
}
button, input, select {
    font: inherit;
    color: inherit;
    margin: 0;
    padding: 0;
    border: none;
    border-radius: 0;
    background: none;
}
svg {
    display: block;
    flex: none;
}
h1, h2, h3 {
    margin: 0;
    font-weight: normal;
}
.defs {
    position: absolute;
}

/* title and menu */
.title-bar {
    display: flex;
    align-items: center;
    flex: none;
    height: 36px;
    padding: 0 1px 0 8px;
    font-family: "Noto Sans", sans-serif;
}
.title-bar h1 {
    flex: 1;
    margin-left: 6px;
    font-size: 15px;
    white-space: nowrap;
}
.window-controls {
    display: flex;
}
.window-controls button {
    width: 58px;
    height: 34px;
    display: grid;
    place-items: center;
}
.menu-bar {
    display: flex;
    align-items: center;
    flex: none;
    gap: 16px;
    height: 31px;
    padding: 0 1px 0 4px;
    border-bottom: 1px solid #aeb6c2;
    font-family: "Noto Sans", sans-serif;
    font-size: 15px;
}
.menu-bar a {
    color: #000;
    text-decoration: none;
}
.menu-icon {
    margin: 0 -6px 0 -9px;
}
.mdi-controls {
    display: flex;
    gap: 1px;
    margin-left: auto;
}
.mdi-controls button {
    width: 43px;
    height: 23px;
    border: 1px solid #e3e3e3;
    display: grid;
    place-items: center;
}
.grip {
    flex: none;
    align-self: stretch;
    width: 2px;
    margin: 2px 0;
    background: repeating-linear-gradient(#b5b5b5 0 2px, transparent 2px 4px);
}

/* toolbars */
.toolbar {
    display: flex;
    align-items: center;
    flex: none;
    height: 41px;
    padding: 0 4px;
    border-bottom: 1px solid #dcdcdc;
}
.tool {
    flex: none;
    width: 37px;
    height: 35px;
}
.toolbar > .grip + .tool {
    margin-left: 3px;
}
.tool svg {
    width: 100%;
    height: 100%;
}
.tool.drop {
    width: 18px;
}
.tool.on {
    background-color: #cce6ff;
    box-shadow: inset 0 0 0 1px #94cdf7;
}
.tool.drop.on {
    width: 19px;
}
.toolbar > .gap-left {
    margin-left: 3px;
}
.sep {
    flex: none;
    width: 8px;
    height: 32px;
    background: linear-gradient(#8a8a8a, #8a8a8a) 2px 0 / 1px 100% no-repeat;
}
.band-end {
    flex: none;
    align-self: stretch;
    width: 4px;
    border-left: 1px solid #999;
    margin-left: 5px;
}
.band-end.wide {
    margin-left: 11px;
}
.fill {
    flex: 1;
}
.space {
    width: 10px;
}
.more {
    flex: none;
    align-self: flex-start;
    width: 14px;
    font-size: 20px;
    line-height: 14px;
    color: #6f6ba8;
}
.tip-holder {
    position: relative;
    display: flex;
}
.tooltip {
    position: absolute;
    left: 24px;
    top: 29px;
    z-index: 5;
    padding: 0 5px;
    border: 1px solid #666;
    background-color: #fff;
    box-shadow: 3px 3px 2px #555;
    color: #555;
    font-size: 15px;
    line-height: 22px;
    white-space: nowrap;
}

/* trade bar */
.trade-bar {
    display: flex;
    flex: none;
    height: 99px;
    padding: 2px 4px 3px 2px;
    background-color: #efefef;
    border-bottom: 1px solid #9c9c9c;
}
.trade-handle {
    width: 23px;
    display: flex;
    flex-direction: column;
    align-items: center;
    gap: 6px;
    padding-top: 6px;
    background: linear-gradient(#bcd5ef, #9bb6d6);
}
.trade-handle span {
    writing-mode: vertical-rl;
    transform: rotate(180deg);
    color: #5f6d80;
    font-size: 15px;
    line-height: 18px;
}
.trade-body {
    flex: 1;
    display: flex;
    flex-direction: column;
    margin-left: 2px;
    font-size: 12px;
}
.broker-tabs {
    display: flex;
    align-items: flex-end;
    height: 25px;
    padding-left: 1px;
}
.broker-tabs button {
    display: flex;
    align-items: center;
    gap: 10px;
    height: 23px;
    padding: 0 6px 0 11px;
    border: 1px solid #d9d9d9;
    border-right: none;
    border-bottom: none;
    white-space: nowrap;
}
.broker-tabs button.active {
    height: 26px;
    margin-bottom: -1px;
    padding: 0 7px 3px 11px;
    border-right: 1px solid #d9d9d9;
    background-color: #fff;
}
.dot {
    width: 11px;
    height: 11px;
    border-radius: 50%;
    background-color: #ea705b;
}
.dot.live {
    background-color: #2fb47c;
}
.trade-form {
    flex: 1;
    display: flex;
    align-items: center;
    padding: 0 14px 6px 15px;
    border: 1px solid #d9d9d9;
    background-color: #fff;
}
.field {
    display: flex;
    align-items: center;
    height: 31px;
    border: 1px solid #6e6e6e;
    background-color: #fff;
}
.field input {
    flex: 1;
    min-width: 0;
    width: 0;
    height: 100%;
    outline: none;
}
select {
    appearance: none;
    height: 31px;
    border: 1px solid #a8a8a8;
    background: #e1e1e1 url("data:image/svg+xml,%3Csvg xmlns='http://www.w3.org/2000/svg' width='10' height='7'%3E%3Cpath d='M1 1l4 4 4-4' fill='none' stroke='%23555' stroke-width='1.300'/%3E%3C/svg%3E") right 5px center no-repeat;
}
.trade-form select, .trade-form .field input {
    padding-left: 3px;
    padding-bottom: 5px;
}
.symbol-field {
    width: 137px;
    padding-right: 3px;
    font-size: 13px;
}
.order-type {
    width: 84px;
    margin-left: 9px;
}
.qty-field {
    width: 95px;
    margin-left: 15px;
    padding-right: 3px;
}
.spin {
    display: flex;
    flex-direction: column;
    gap: 1px;
    margin-left: 8px;
}
.spin button {
    width: 18px;
    height: 12px;
    border: 1px solid #adadad;
    background-color: #f0f0f0;
    display: grid;
    place-items: center;
}
.price {
    display: flex;
    align-items: center;
    width: 112px;
    height: 29px;
    margin: 0 8px 0 15px;
    padding-right: 3px;
    border: 1px solid #a8a8a8;
    background-color: #c9d8ab;
    font-size: 13px;
}
.price span {
    flex: 1;
}
.account {
    width: 118px;
    font-size: 13px;
}
.tif {
    width: 66px;
    margin-left: 8px;
}
.quote {
    width: 68px;
    margin: 0 25px;
    font-size: 13px;
    white-space: nowrap;
}
.big {
    display: flex;
    flex-direction: column;
    align-items: center;
    justify-content: center;
    width: 75px;
    height: 44px;
    margin-right: 7px;
    border: 1px solid #a8a8a8;
    line-height: 17px;
}
.big b {
    font-family: "DejaVu Sans", sans-serif;
    font-size: 13px;
}
.big + .quote {
    margin-left: 18px;
}
.buy {
    background-color: #b0bfdf;
}
.sell {
    background-color: #e2a1a1;
}

/* data window */
.workspace {
    flex: 1;
    display: flex;
    min-height: 0;
}
.data-window {
    width: 213px;
    display: flex;
    flex-direction: column;
    padding: 2px 2px 2px;
    background: linear-gradient(#000, #000) 2px 26px / 208px calc(100% - 28px) no-repeat #f0f0f0;
    border-right: 1px solid #888;
    border-bottom: 1px solid #999;
}
.data-title {
    display: flex;
    align-items: center;
    justify-content: space-between;
    height: 21px;
    margin-bottom: 3px;
    padding: 0 6px 0 4px;
    background: linear-gradient(90deg, #9bb6d6, #bcd5ef);
}
.data-title h2 {
    color: #5f6d80;
    font-family: "Noto Sans", sans-serif;
    font-size: 15px;
    line-height: 20px;
}
.data-window table {
    width: 208px;
    border-spacing: 0;
    font: 13px/15px "Liberation Sans", Arial, sans-serif;
    color: #fff;
}
.data-window th, .data-window td {
    height: 16px;
    padding: 0 5px;
    border-bottom: 1px solid #444;
    text-align: left;
    font-weight: normal;
}
.data-window th {
    background-color: #424242;
}
.data-window td:first-child {
    width: 76px;
    border-right: 1px solid #444;
    white-space: nowrap;
}
.data-window td:last-child {
    text-align: right;
}
.dim td:last-child {
    color: #aaa;
}
.plot td:last-child {
    color: #ff7878;
}

/* chart */
.desk {
    flex: 1;
    min-width: 0;
    display: flex;
    flex-direction: column;
}
.desk-top {
    flex: 1;
    min-height: 0;
    display: flex;
}
.chart-pane {
    flex: 1;
    min-width: 0;
    display: flex;
    flex-direction: column;
}
.chart {
    flex: 1;
    min-height: 0;
    position: relative;
    overflow: hidden;
    background-color: #000;
    font: 13px/18px "Liberation Sans", "Noto Sans CJK TC", Arial, sans-serif;
}
.chart > svg {
    position: absolute;
    inset: 0;
    width: 100%;
    height: 100%;
}
.chart-status {
    position: absolute;
    z-index: 1;
    left: 4px;
    top: 4px;
    color: #fff;
    white-space: nowrap;
}
.line {
    display: flex;
    align-items: center;
    gap: 7px;
    height: 18px;
}
.tags {
    gap: 6px;
    padding-left: 7px;
    color: #b0b0b0;
}
.args {
    gap: 8px;
}
.params {
    margin-left: 5px;
}
.green {
    color: #0f0;
}
.red {
    color: #f00;
}
.pink {
    color: #ff32c8;
}
.tag, .box {
    display: flex;
    align-items: center;
    height: 16px;
    padding: 0 3px;
    border: 1px solid #fff;
    border-radius: 2px;
    color: #fff;
    line-height: 14px;
}
.tag {
    background-color: #808080;
}
.box {
    min-width: 16px;
    justify-content: center;
}
.box.cross {
    padding: 0 2px;
}
.split {
    width: 1px;
    height: 14px;
    margin: 0 2px;
    background-color: #fff;
}
.tri {
    border: 4px solid transparent;
    border-top-color: #fff;
    border-bottom: none;
}
.tri.dark {
    border-width: 4px 4px 0;
    border-top-color: #000;
}
.position {
    position: absolute;
    left: 446px;
    top: 447px;
    z-index: 1;
    display: flex;
    gap: 1px;
    height: 17px;
    padding: 1px;
    border-radius: 1px;
    background-color: #fff;
    line-height: 15px;
    text-align: center;
}
.position button {
    width: 15px;
    display: grid;
    place-items: center;
    background-color: #c3c3c3;
}
.size {
    width: 19px;
    background-color: #00f;
    color: #fff;
}
.profit {
    width: 71px;
    background-color: #32c032;
}
.scroll {
    display: flex;
    align-items: center;
    height: 21px;
    padding: 0 6px;
    background-color: #f0f0f0;
}
.thumb {
    width: 21px;
    height: 19px;
    margin: 0 9px 0 auto;
    background-color: #cdcdcd;
}

/* order panel */
.order-panel {
    position: relative;
    flex: none;
    width: 284px;
    padding: 6px 5px 0 6px;
    background-color: #f0f0f0;
}
.ring {
    position: absolute;
    z-index: 2;
    left: -6px;
    right: 0;
    top: 1px;
    height: 49px;
    border: 4px solid #fb5a31;
    border-radius: 12px;
    pointer-events: none;
}
.account-row {
    display: flex;
    height: 32px;
}
.status {
    display: flex;
    align-items: center;
    gap: 8px;
    width: 49px;
    padding-left: 9px;
    border: 1px solid #adadad;
    background-color: #e1e1e1;
}
.account-row select {
    flex: 1;
    height: 32px;
    margin: 0 10px 0 6px;
    padding-left: 5px;
    border-color: #707070;
    background-color: #f0f0f0;
}
.account-row .close {
    width: 14px;
    margin-right: 7px;
}
.mode-row {
    display: grid;
    grid-template-columns: 89fr 85fr 89fr;
    gap: 5px;
    margin-top: 6px;
}
.mode-row button {
    height: 31px;
    border: 1px solid #707070;
    background-color: #dedede;
}
.mode-row .active {
    border-color: #2f5f8a;
    background-color: #b9dcec;
}
.order-grid {
    display: grid;
    grid-template-columns: 1fr 1fr 1fr;
    gap: 6px;
    margin-top: 19px;
}
.column {
    display: flex;
    flex-direction: column;
    gap: 6px;
}
.column button {
    height: 31px;
    border: 1px solid #adadad;
    background-color: #e1e1e1;
    white-space: nowrap;
}
.column .buy {
    background-color: #b0bfdf;
}
.column .sell {
    background-color: #e2a1a1;
}
.column button:disabled {
    border-color: #bfbfbf;
    background-color: #cccccc;
    color: #777;
}
.column .cancel {
    height: 32px;
}
.column .two {
    height: 44px;
    line-height: 18px;
}
.two b {
    display: block;
    font: bold 14px/18px "DejaVu Sans", sans-serif;
}
.middle {
    justify-content: space-between;
}
.middle svg {
    margin: 32px auto 20px;
}
.pnl {
    display: flex;
    flex-direction: column;
    height: 64px;
    padding: 6px 5px 4px;
    background-color: #e3e3e3;
    text-align: center;
    font-family: "DejaVu Sans", sans-serif;
}
.pnl b {
    flex: 1;
    font-size: 14px;
    line-height: 24px;
}
.pnl strong {
    padding-left: 4px;
    background-color: #61ca61;
    font-size: 13px;
    line-height: 27px;
}
.size-row {
    display: flex;
    gap: 7px;
    margin-top: 6px;
}
.size-row .field {
    width: 130px;
    padding: 0 6px 0 4px;
    gap: 9px;
    border-color: #9a9a9a;
}
.size-row select {
    flex: 1;
    padding-left: 5px;
    border-color: #707070;
    background-color: #f0f0f0;
}
.order-panel h3 {
    margin-top: 13px;
    font-size: 13px;
    line-height: 18px;
}
.palette {
    position: relative;
    margin: 5px 0 0;
    padding-bottom: 3px;
    border: 1px solid #c5c5c8;
    background-color: #fff;
}
.order-panel .palette + h3 {
    margin-top: 12px;
}
.palette-items {
    display: grid;
    grid-template-columns: repeat(4, 34px);
    column-gap: 30px;
    row-gap: 24px;
    height: 95px;
    padding: 13px 18px 0;
    overflow: hidden;
}
.palette-items text {
    fill: #fff;
    font: bold 11px "Open Sans", sans-serif;
}
.palette-items .small {
    font-size: 10px;
}
.palette-items .muted {
    fill: #b5b5b5;
    font-weight: 600;
}
.expand {
    position: absolute;
    left: 126px;
    bottom: 0;
    width: 19px;
    height: 10px;
    border: 1px solid #777;
    background-color: #f0f0f0;
    display: grid;
    place-items: center;
}

/* workspace tabs */
.sheet-tabs {
    display: flex;
    flex: none;
    height: 23px;
    border-top: 1px solid #777;
    background-color: #e5e5e5;
}
.sheet-nav {
    display: flex;
    align-items: center;
    gap: 14px;
    width: 93px;
    padding-left: 6px;
    background-color: #f0f0f0;
}
.sheet {
    position: relative;
    margin-right: -10px;
    padding: 0 16px 3px;
    background-color: #999;
    clip-path: polygon(0 0, 100% 0, calc(100% - 11px) 100%, 11px 100%);
    font-family: "Noto Sans", "Noto Sans CJK TC", sans-serif;
    font-size: 15px;
    line-height: 18px;
    white-space: nowrap;
}
.sheet::before {
    content: "";
    position: absolute;
    inset: 0 1px 1px;
    background-color: #c2c2c2;
    clip-path: polygon(0 0, 100% 0, calc(100% - 11px) 100%, 11px 100%);
}
.sheet.active {
    z-index: 1;
    padding: 0 17px 3px;
    margin-right: -11px;
    background-color: #555;
}
.sheet.active::before {
    background-color: #f7f7f7;
}
.sheet span {
    position: relative;
}
.add-sheet {
    margin-left: 17px;
}

/* drawing toolbar */
.draw-bar {
    border-top: 1px solid #ddd;
    border-bottom: none;
    padding: 3px 1px 0 4px;
}
.toolbar.draw-bar > .grip + .tool {
    margin-left: 5px;
}
.draw-bar .tool path {
    fill: none;
    stroke: #666;
}
.draw-bar .tool .blue {
    stroke: #1b5372;
}
.draw-bar .band-end, .draw-bar .grip {
    margin-top: -2px;
}
.draw-bar select {
    height: 27px;
    padding-left: 3px;
    font-size: 15px;
    white-space: nowrap;
}
.symbol-pick {
    width: 193px;
    margin-left: 5px;
    border-color: #777;
    background-color: #fff;
}
.resolution {
    width: 164px;
    margin-left: 5px;
}
.resolution + .band-end {
    margin-left: 2px;
}
.tail {
    width: 38px;
    height: 26px;
    margin: 0 5px 0 2px;
    border: 1px solid #777;
    border-right: none;
}
```
FILE: chart.js
```
const NS = 'http://www.w3.org/2000/svg';

// one row per 5 minute bar: high, body top, body bottom, low, colour
const bars = [
    [335, 346, 395, 450, '#ff0'], [332, 346, 367, 433, '#ff0'], [315, 370, 370, 409, '#ff0'],
    [370, 377, 492, 516, '#ffb546'], [425, 449, 492, 537, '#ff9a5f'], [439, 442, 606, 623, '#ff46b4'],
    [587, 605, 647, 757, '#ff0af0'], [605, 653, 681, 737, '#f0f'], [539, 549, 678, 723, '#f0f'],
    [536, 549, 678, 692, '#f0f'], [591, 591, 678, 685, '#ff14eb'], [504, 508, 592, 616, '#ff46b9'],
    [484, 515, 595, 606, '#ff50af'], [501, 511, 592, 626, '#ff6496'], [498, 508, 578, 581, '#ff6a90'],
    [463, 477, 578, 588, '#ff7d7d'], [411, 460, 478, 499, '#ff8c73'], [453, 456, 537, 543, '#ff827d'],
    [473, 532, 574, 578, '#ff787d'], [529, 570, 619, 626, '#ff6496'], [573, 601, 619, 647, '#ff5aa5'],
    [580, 594, 599, 661, '#ff5aa5'], [587, 591, 650, 650, '#ff46b9'], [587, 643, 702, 702, '#ff28dc'],
    [594, 605, 699, 702, '#ff1edc'], [542, 546, 602, 619, '#ff5aa5'], [532, 542, 550, 578, '#ff787d'],
    [511, 525, 543, 561, '#ffa05a'], [508, 522, 578, 581, '#ff9b64'], [532, 539, 574, 595, '#ffa555'],
    [515, 539, 561, 574, '#ffa05a'], [549, 549, 557, 578, '#ffaa50'], [518, 518, 557, 557, '#ffb93c'],
    [498, 511, 519, 540, '#ffc337'], [473, 494, 509, 512, '#ffcd2d'], [446, 484, 492, 495, '#ffd728'],
    [439, 439, 485, 516, '#ffeb14'], [418, 435, 450, 464, '#ff0'], [415, 449, 454, 457, '#ff0'],
    [418, 432, 450, 454, '#ff0'], [401, 435, 467, 481, '#ffcd28'], [439, 446, 464, 478, '#ffc337'],
    [432, 446, 446, 457, '#ffa050'], [442, 446, 485, 492, '#ff7d7d'], [470, 477, 481, 502, '#ff7878'],
    [446, 460, 481, 481, '#ff7882'], [435, 439, 461, 467, '#ff8c78'], [384, 394, 440, 440, '#ffa05f'],
    [359, 387, 423, 423, '#ff9b5f'], [408, 422, 440, 447, '#ff8773'], [425, 435, 450, 450, '#ff7d7d'],
    [425, 446, 446, 454, '#ff7387'], [442, 446, 454, 474, '#ff648c'], [401, 408, 454, 457, '#ff6e87'],
    [408, 411, 416, 423, '#ff7878'], [411, 411, 440, 474, '#ff5096'], [415, 439, 443, 450, '#f0f'],
    [411, 439, 450, 450, '#f0f'], [439, 449, 467, 467, '#f0f'], [442, 463, 467, 467, '#f0f'],
    [456, 456, 464, 474, '#f0f'], [435, 446, 450, 457, '#ff28dc'], [422, 432, 450, 450, '#ff32d2'],
    [415, 428, 433, 433, '#ff50af'], [394, 404, 426, 426, '#ff7882'], [394, 404, 416, 419, '#ff7882'],
    [415, 415, 440, 443, '#ff648c'], [439, 439, 464, 464, '#ff3cc8'], [456, 460, 464, 474, '#ff28dc'],
    [466, 466, 478, 492, '#f0f'], [470, 473, 481, 485, '#f0f'], [473, 473, 492, 495, '#f0f'],
    [484, 491, 499, 509, '#f0f'], [477, 494, 502, 502, '#f0f'], [501, 501, 516, 533, '#f0f'],
    [491, 494, 516, 516, '#f0f'], [491, 494, 526, 526, '#f0f'], [508, 522, 526, 537, '#f0f'],
    [501, 515, 526, 526, '#ff14eb'], [487, 498, 519, 519, '#ff46b4'], [494, 498, 502, 512, '#ff7878'],
    [491, 498, 509, 512, '#ff7878'], [498, 511, 526, 526, '#ff6e82'], [518, 525, 533, 543, '#ff6e82'],
    [529, 532, 540, 547, '#ff648c'], [532, 536, 540, 543, '#ff648c'], [532, 536, 554, 561, '#ff648c'],
    [542, 542, 557, 557, '#ff6e87'], [542, 542, 557, 557, '#ff6e87'], [532, 536, 557, 564, '#ff7878'],
    [532, 536, 540, 543, '#ff7878'], [508, 515, 540, 547, '#ff8c73'], [508, 511, 516, 526, '#ffc337']
];

const hours = [[10, '10:00'], [22, '11:00'], [34, '12:00'], [46, '13:00'], [56, '15:05'], [67, '16:00'], [79, '17:00'], [91, '']];
const plots = [17156, 17151, 17140, 17133];
const TOP = 208;
const STEP = 8;

function add(svg, name, attrs, text) {
    const el = document.createElementNS(NS, name);
    for (const key in attrs) {
        el.setAttribute(key, attrs[key]);
    }
    if (text) {
        el.textContent = text;
    }
    svg.appendChild(el);
}

function priceY(price) {
    return Math.round((17220 - price) * 3.446 + 100);
}

function drawTag(svg, x, price, fill) {
    const y = priceY(price);
    add(svg, 'path', { d: `M${x} ${y + 0.5}l7-7.5h40v15h-40z`, fill: fill });
    add(svg, 'text', { x: x + 8, y: y + 5, fill: '#000' }, price.toLocaleString('en-US'));
}

function drawChart() {
    const chart = document.getElementById('chart');
    const old = chart.querySelector(':scope > svg');
    if (old) {
        old.remove();
    }
    const svg = document.createElementNS(NS, 'svg');
    const axisX = chart.clientWidth - 50;
    const axisY = chart.clientHeight - 20;
    const barX = i => axisX - 743 + i * STEP;

    // grid, with no scale label where a plot tag sits on it
    for (let p = 17090; p <= 17220; p += 10) {
        const y = priceY(p);
        add(svg, 'path', { d: `M3 ${y + 0.5}H${axisX}`, stroke: '#505050', 'stroke-dasharray': '1 3' });
        add(svg, 'path', { d: `M${axisX} ${y + 0.5}h4M${axisX} ${y + 17.5}h2`, stroke: '#f00' });
        if (!plots.some(plot => Math.abs(plot - p) < 2)) {
            add(svg, 'text', { x: axisX + 7, y: y + 5, fill: '#fff' }, p.toLocaleString('en-US'));
        }
    }
    hours.forEach(([i, label]) => {
        const x = barX(i);
        add(svg, 'path', { d: `M${x + 0.5} 3V${axisY}`, stroke: '#505050', 'stroke-dasharray': '1 3' });
        add(svg, 'path', { d: `M${x + 0.5} ${axisY}v4`, stroke: '#f00' });
        add(svg, 'text', { x: x + 2, y: axisY + 17, fill: '#fff' }, label);
    });
    add(svg, 'path', { d: `M${barX(55) + 0.5} 3V${axisY}`, stroke: '#505050', 'stroke-dasharray': '9 6 3 6' });

    bars.forEach(([high, top, bottom, low, colour], i) => {
        const x = barX(i);
        add(svg, 'rect', { x: x, y: high - TOP, width: 1, height: low - high, fill: colour });
        if (top === bottom) {
            add(svg, 'rect', { x: x - 3, y: top - TOP, width: 6, height: 1, fill: colour });
        } else {
            add(svg, 'rect', { x: x - 2, y: top - TOP, width: 5, height: bottom - top, fill: colour });
        }
    });
    add(svg, 'rect', { x: axisX - 1, y: 300, width: 1, height: 1, fill: '#ff0' });

    // axes
    add(svg, 'path', { d: `M0 ${axisY + 0.5}H${axisX + 0.5}V0`, fill: 'none', stroke: '#f00' });

    // open position and plot values
    add(svg, 'path', { d: `M570 ${priceY(17117) + 0.5}H${axisX}`, stroke: '#fff' });
    plots.forEach(p => drawTag(svg, axisX + 2, p, '#ff32c8'));
    drawTag(svg, axisX + 2, 17117, '#fff');

    chart.prepend(svg);
}

drawChart();
window.addEventListener('resize', drawChart);
```
